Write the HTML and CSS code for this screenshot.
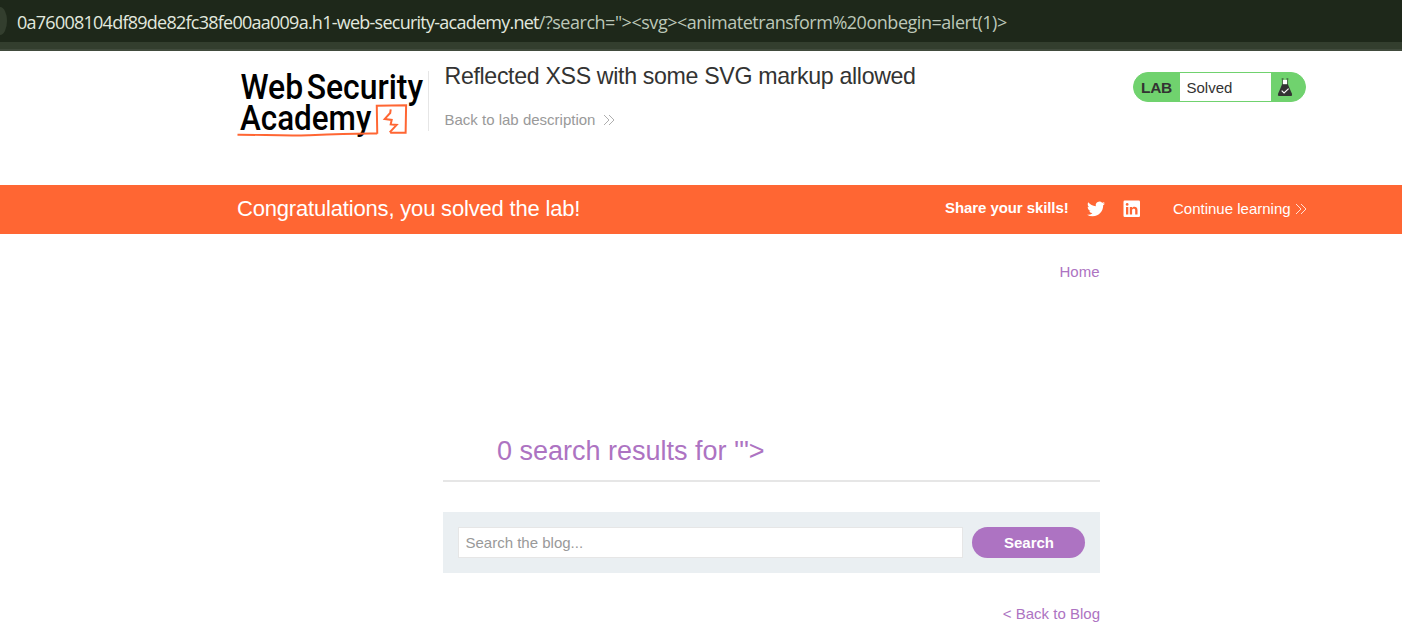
FILE: index.html
```html
<!DOCTYPE html>
<html lang="en">
<head>
<meta charset="utf-8">
<title>Reflected XSS with some SVG markup allowed</title>
<link rel="stylesheet" href="styles.css">
</head>
<body>
<div class="browser-bar">
  <div class="address"><span class="site-chip"></span><span class="url"><span class="url-host">0a76008104df89de82fc38fe00aa009a.h1-web-security-academy.net</span><span class="url-path">/?search="&gt;&lt;svg&gt;&lt;animatetransform%20onbegin=alert(1)&gt;</span></span></div>
</div>
<header class="lab-header">
  <svg class="logo" width="192" height="72" viewBox="0 0 192 72" role="img" aria-label="Web Security Academy">
    <g class="logo-text">
      <text x="3.500" y="32" textLength="63" lengthAdjust="spacingAndGlyphs">Web</text>
      <text x="70" y="32" textLength="117" lengthAdjust="spacingAndGlyphs">Security</text>
      <text x="3" y="63" textLength="132" lengthAdjust="spacingAndGlyphs">Academy</text>
    </g>
    <g fill="none" stroke="#ff6633">
      <path d="M0.500 67.900C25 67.800 45 69.200 72 68.400C98 67.200 115 66.400 141 66.700" stroke-width="2"/>
      <path d="M141 67L140.500 38.800L170 38.300L169.500 65.800L154 66" stroke-width="2"/>
      <path d="M154.500 42.500L154 46L148.500 52L155.500 53L154.500 57.500L160.500 58L153.500 65.500" stroke-width="2"/>
    </g>
  </svg>
  <div class="title-block">
    <h2 class="lab-title">Reflected XSS with some SVG markup allowed</h2>
    <a class="back-link">Back to lab description <svg width="12" height="12" viewBox="0 0 12 12"><path d="M1 1l5 5-5 5M6 1l5 5-5 5"/></svg></a>
  </div>
  <div class="lab-status">
    <b class="lab-tag">LAB</b>
    <span class="lab-state">Solved</span>
    <svg class="flask" width="16" height="20" viewBox="0 0 16 20">
      <path d="M5.800 2h4.400v5H5.800z" fill="#fff"/>
      <path d="M5.300 1.500V8M10.700 1.500V8" fill="none" stroke="#333332" stroke-width=".7"/>
      <path d="M4.500 1h2M9.500 1h2" stroke="#333332"/>
      <path d="M5 6.500h6l4.300 10q.8 2.500-1 2.500H1.700q-1.800 0-1-2.500z" fill="#333332"/>
      <path d="M4.500 13.300l2.500 2.500 4.800-4.600" fill="none" stroke="#fff" stroke-width="1.200"/>
    </svg>
  </div>
</header>
<section class="banner">
  <h4 class="banner-title">Congratulations, you solved the lab!</h4>
  <b class="share">Share your skills!</b>
  <svg class="twitter" width="18" height="18" viewBox="0 0 24 24"><path fill="#fff" d="M23.950 4.570a10 10 0 0 1-2.820.77 4.960 4.960 0 0 0 2.160-2.720c-.95.550-2 .96-3.130 1.180a4.920 4.920 0 0 0-8.380 4.480C7.690 8.100 4.070 6.130 1.640 3.160a4.820 4.820 0 0 0-.67 2.480c0 1.710.87 3.210 2.190 4.100a4.900 4.900 0 0 1-2.230-.62v.06a4.920 4.920 0 0 0 3.950 4.830 5 5 0 0 1-2.210.08 4.940 4.940 0 0 0 4.600 3.420A9.870 9.870 0 0 1 0 19.540a13.990 13.990 0 0 0 7.550 2.210c9.050 0 14-7.500 14-13.990 0-.21 0-.42-.02-.63a9.940 9.940 0 0 0 2.420-2.560z"/></svg>
  <svg class="linkedin" width="18" height="18" viewBox="0 0 18 18"><rect x=".5" y=".5" width="16.500" height="16.500" rx="1.200" fill="#fff"/><path fill="#ff6633" d="M3 7h2.300v7.500H3zM6.800 7H9v1c1.300-1.800 5.500-1.700 5.500 2v4.500h-2.300v-4.200c0-2.100-3.100-1.900-3.100 0v4.200H6.800z"/><circle cx="4.150" cy="4.400" r="1.350" fill="#ff6633"/></svg>
  <a class="continue">Continue learning <svg width="12" height="12" viewBox="0 0 12 12"><path d="M1 1l5 5-5 5M6 1l5 5-5 5"/></svg></a>
</section>
<main class="blog">
  <nav class="top-links"><a>Home</a></nav>
  <h1 class="results">0 search results for '"&gt;</h1>
  <form class="search">
    <input class="search-input" type="text" placeholder="Search the blog...">
    <button class="search-button" type="button">Search</button>
  </form>
  <div class="back-to-blog"><a>&lt; Back to Blog</a></div>
</main>
</body>
</html>
```
FILE: styles.css
```css
* { box-sizing: border-box; }
body {
  margin: 0;
  height: 640px;
  overflow: hidden;
  background: #fff;
  color: #333332;
  font: 15px/18px "Liberation Sans", Arial, sans-serif;
}
h1, h2, h4 { margin: 0; font-weight: 400; }
.browser-bar { height: 51px; background: #333e2e; border-bottom: 2px solid #414b3d; }
.address {
  display: flex;
  align-items: center;
  height: 42px;
  background: #1e281a;
  white-space: nowrap;
  font: 18px/24px "Open Sans", "Noto Sans", sans-serif;
}
.site-chip { width: 7px; height: 28px; margin-right: 10px; border-radius: 0 7px 7px 0 / 0 14px 14px 0; background: #333e2e; }
.url { padding-top: 1px; }
.url-host { color: #e2e8df; letter-spacing: -0.75px; }
.url-path { color: #bcc7b8; letter-spacing: -0.47px; }
.lab-header { display: flex; align-items: flex-start; height: 134px; padding: 16px 96px 0 237px; }
.logo { flex: none; display: block; overflow: visible; border-right: 1px solid; border-image: linear-gradient(#fff 5px, #e6e6e6 5px, #e6e6e6 63px, #fff 63px) 1; }
.logo-text { font: 500 36px Roboto, sans-serif; fill: #000; }
.title-block { margin-top: -4px; padding-left: 15.5px; }
.lab-title { font-size: 23.2px; line-height: 27px; letter-spacing: -0.35px; white-space: nowrap; }
.back-link { display: block; margin-top: 17px; line-height: 26px; color: #999; white-space: nowrap; }
.back-link svg, .continue svg { margin-left: 3px; fill: none; stroke: currentColor; stroke-width: .8; vertical-align: -1px; }
.lab-status { display: flex; align-items: center; width: 173px; height: 30px; margin: 5px 0 0 auto; border: 1px solid #70d26e; border-radius: 15px; background: #70d26e; }
.lab-tag { width: 46px; padding: 2px 0 0 7px; font-size: 15.5px; letter-spacing: -0.3px; }
.lab-state { width: 91px; height: 28px; padding: 1px 0 0 6.5px; line-height: 28px; background: #fff; }
.flask { margin-left: 6px; padding-top: 1px; }
.banner { display: flex; align-items: center; height: 49px; padding: 0 94px 2px 237px; background: #ff6633; color: #fff; white-space: nowrap; }
.banner-title { width: 708px; font-size: 22px; line-height: 28px; letter-spacing: -0.18px; }
.share { width: 142px; padding-bottom: 2px; letter-spacing: -0.08px; }
.twitter, .linkedin { margin-top: 1px; }
.twitter { margin-right: 18px; }
.linkedin { margin-right: 32px; }
.continue svg { margin-left: 0; }
.blog { width: 657px; margin-left: 443px; }
.blog a { color: #ad73c2; }
.top-links { height: 195px; padding: 29px .5px 0 0; text-align: right; }
.results { height: 53px; padding-left: 54px; border-bottom: 2px solid #e6e6e6; color: #ad73c2; font-size: 27px; line-height: 44px; }
.search { display: flex; gap: 9px; height: 61px; margin-top: 30px; padding: 15px; background: #eaeff2; }
.search-input { width: 505px; height: 31px; padding: 0 6.5px; border: 1px solid #e6e6e6; background: #fff; font: 15px "Liberation Sans", Arial, sans-serif; }
.search-input::placeholder { color: #999; opacity: 1; }
.search-button { width: 113px; height: 31px; padding: 0 0 0 1px; border: 0; border-radius: 16px; background: #ad73c2; color: #fff; font: bold 15px "Liberation Sans", Arial, sans-serif; }
.back-to-blog { margin-top: 32px; text-align: right; }
```
